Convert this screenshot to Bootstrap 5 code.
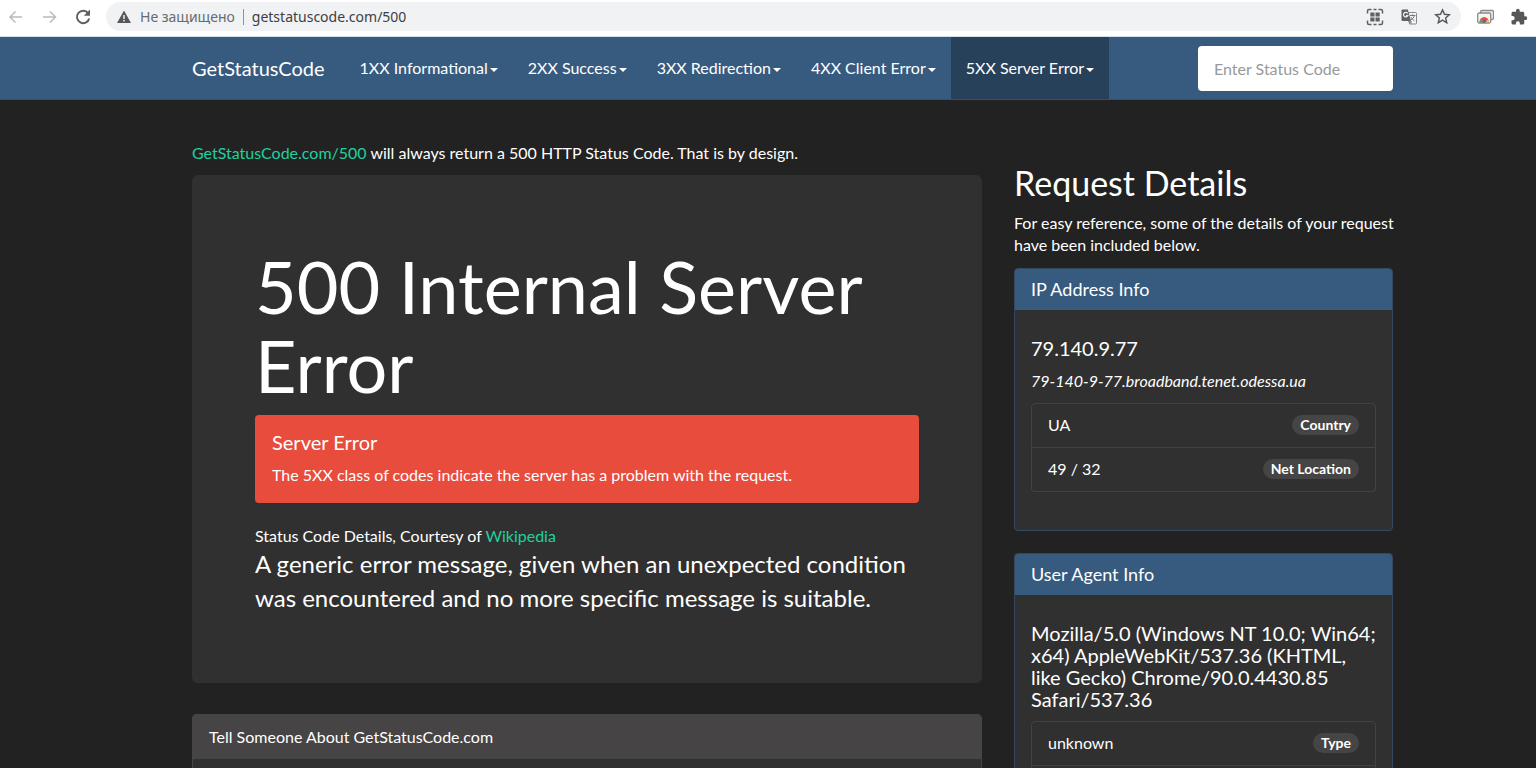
<!DOCTYPE html>
<html lang="en">
<head>
<meta charset="utf-8">
<meta name="viewport" content="width=device-width, initial-scale=1">
<title>500 Internal Server Error</title>
<link href="https://cdn.jsdelivr.net/npm/bootstrap@5.3.0/dist/css/bootstrap.min.css" rel="stylesheet">
<style>
  body { font-family: Lato, "Liberation Sans", sans-serif; font-size: 16px; line-height: 22px; color: #fff; background: #222; }
  a { color: #1fd1a0; text-decoration: none; }
  h1, h2, h3, h4 { font-weight: 400; margin: 0; }
  h4 { font-size: 20px; line-height: 22px; margin-bottom: 11px; }

  /* browser toolbar */
  .toolbar { height: 37px; padding: 0 8px 3px; background: #fff; border-bottom: 1px solid #d5e1ea; font-family: "Noto Sans", sans-serif; font-size: 14px; line-height: 20px; }
  .toolbar button { border: 0; padding: 0; background: none; display: flex; }
  .toolbar svg { display: block; }
  .omnibox { height: 29px; margin-left: 14px; padding: 0 10px; border-radius: 15px; background: #f0f2f4; color: #686b6e; }
  .omnibox input { border: 0; padding: 0; background: none; color: #3d4043; outline: 0; min-width: 0; }
  .url-divider { width: 1px; height: 16px; background: #909396; }

  /* site layout */
  .site-container { max-width: 1233px; padding: 0 16px; margin-left: 176px; }
  .site-row { --bs-gutter-x: 32px; }
  .site-nav { background: #375a7f; padding: 0; border-bottom: 1px solid #31506f; }
  .site-nav .navbar-brand { font-size: 20px; line-height: 22px; padding: 20px 0; margin: 0 20px 0 0; color: #fff; }
  .site-nav .navbar-nav .nav-link { font-size: 16px; line-height: 22px; padding: 20px 15px; color: #fff; }
  .site-nav .navbar-nav .nav-link.active { background: #28415b; }
  .site-nav .dropdown-toggle::after { border-width: 4px 4px 0; margin-left: 2px; vertical-align: 2px; }
  .code-search { width: 195px; height: 45px; padding: 0 16px; border: 0; border-radius: 4px; font-size: 16px; background: #fff; }
  .code-search::placeholder { color: #999; }

  .intro { padding-top: 42px; }
  .aside-intro { padding-top: 64px; }
  .hero { background: #303030; border-radius: 6px; padding: 72px 63px 68px; margin: 11px 0 31px; }
  .hero h1 { font-size: 72px; line-height: 79px; margin-bottom: 10px; }
  .hero .alert { background: #e74c3c; color: #fff; border: 0; border-radius: 4px; padding: 16px 17px 17px; margin-bottom: 22px; }
  .hero-text { font-size: 24px; line-height: 34px; margin: 0; }
  .aside-title { font-size: 34px; line-height: 37px; margin-bottom: 11px; }

  .panel { --bs-card-bg: #303030; --bs-card-color: #fff; --bs-card-border-radius: 4px; --bs-card-inner-border-radius: 3px; --bs-card-border-color: #33495f; margin-bottom: 22px; }
  .panel .card-header { background: #375a7f; padding: 9px 16px 10px; font-size: 18px; line-height: 22px; border: 0; }
  .panel .card-header h3 { font-size: inherit; line-height: inherit; }
  .panel .card-body { padding: 27px 16px 16px; }
  .panel-gray { --bs-card-border-color: #464545; }
  .panel-gray .card-header { background: #464444; padding: 11px 16px; font-size: 16px; }
  .info-list { --bs-list-group-bg: transparent; --bs-list-group-color: #fff; --bs-list-group-border-color: #424242; --bs-list-group-border-radius: 4px; margin: 11px 0 22px; }
  .info-list .list-group-item { padding: 10px 16px 11px; }
  .info-list .badge { font-size: 14px; line-height: 14px; padding: 3px 8px; background: #464545; }
</style>
</head>
<body>
<div class="vh-100 d-flex flex-column overflow-hidden">
  <div class="toolbar flex-shrink-0 d-flex align-items-center">
    <button type="button" aria-label="Back"><svg width="16" height="16" viewBox="0 0 16 16" fill="none" stroke="#b9bbbd" stroke-width="1.5"><path d="M14 8H2M7.500 2.500 2 8l5.500 5.500"/></svg></button>
    <button type="button" class="ms-3" aria-label="Forward"><svg width="18" height="16" viewBox="0 0 18 16" fill="none" stroke="#b9bbbd" stroke-width="1.5"><path d="M3 8h12M10 2.500 15.500 8 10 13.500"/></svg></button>
    <button type="button" class="ms-3" aria-label="Reload"><svg width="18" height="18" viewBox="0 0 18 18"><path d="M14.200 5.300A6.200 6.200 0 1 0 15.200 10.500" fill="none" stroke="#5d6063" stroke-width="2"/><path d="M16 1.500v6.300H9.800z" fill="#5d6063"/></svg></button>
    <div class="omnibox flex-grow-1 d-flex align-items-center">
      <svg width="16" height="16" viewBox="0 0 16 16"><path d="M8 1.500 15 14H1z" fill="#55585b"/><path d="M8 6v4M8 11v1.600" stroke="#f0f2f4" stroke-width="1.500"/></svg>
      <label for="address" class="ms-2 text-nowrap">Не защищено</label>
      <span class="url-divider mx-2"></span>
      <input id="address" class="flex-grow-1" type="text" value="getstatuscode.com/500">
      <div class="d-flex align-items-center gap-3">
        <button type="button" aria-label="QR code"><svg width="18" height="18" viewBox="0 0 18 18"><path d="M1.500 5.500V3Q1.500 1.500 3 1.500H5.500M7.500 1.500h3M12.500 1.500H15q1.500 0 1.500 1.500v2.500M16.500 12.500V15q0 1.500-1.500 1.500h-2.500M10.500 16.500h-3M5.500 16.500H3q-1.500 0-1.500-1.500v-2.500" fill="none" stroke="#5f6265" stroke-width="1.500"/><path d="M4.300 4.500h4.200v4H4.300zM9.500 4.500h4.200v4H9.500zM4.300 9.500h4.200v4H4.300zM9.500 9.500h4.200v4H9.500z" fill="#5f6265"/></svg></button>
        <button type="button" aria-label="Translate"><svg width="18" height="18" viewBox="0 0 18 18"><path d="M7.500 4.500h8q1 0 1 1v9.500q0 1-1 1h-6z" fill="#f4f5f6" stroke="#85888b"/><path d="M2.500 1.500h5.300l3.200 11.500H2.500q-1 0-1-1V2.500q0-1 1-1z" fill="#5f6265"/><path d="M7.700 5.300a2.300 2.300 0 1 0 .2 2.300H6" fill="none" stroke="#f0f2f4" stroke-width="1.200"/><path d="M10 7.500h5.500M12.600 6.200v1.300M14.500 7.500q-.8 3-3.500 4.500M11 9q1.200 2.500 3.500 4M8.500 13l2.500 2.500V13z" fill="none" stroke="#777a7d"/></svg></button>
        <button type="button" aria-label="Bookmark"><svg width="17" height="17" viewBox="0 0 18 18"><path d="m9 2 2.100 4.700 5.100.5-3.900 3.400 1.200 5L9 12.900l-4.500 2.700 1.200-5L1.800 7.200l5.100-.5z" fill="none" stroke="#55585b" stroke-width="1.500"/></svg></button>
      </div>
    </div>
    <button type="button" class="ms-3" aria-label="Saved tabs"><svg width="17" height="16" viewBox="0 0 17 16"><path d="M3.500 4V3q0-1.500 1.500-1.500h10Q16.500 1.500 16.500 3v6q0 1.500-1.500 1.500h-1" fill="#eee" stroke="#8c8c8c" stroke-width="1.300"/><rect x=".7" y="4" width="13" height="10" rx="1.500" fill="#f7f5ef" stroke="#8c8c8c" stroke-width="1.300"/><path d="M2.500 13.500a4.700 5.500 0 0 1 9.400 0z" fill="#d9544a"/><path d="M2.500 13.500a4.700 5 0 0 1 1.500-4l2.500 4z" fill="#55a777"/><path d="M12 13.500a4 4 0 0 0-1-3l-3 3z" fill="#ecc45b"/><circle cx="7.200" cy="12.300" r="1.600" fill="#4a7396"/></svg></button>
    <button type="button" class="ms-3" aria-label="Extensions"><svg width="18" height="18" viewBox="0 0 24 24" fill="#55585b"><path d="M20.500 11H19V7c0-1.100-.9-2-2-2h-4V3.500a2.500 2.500 0 0 0-5 0V5H4c-1.100 0-2 .9-2 2v3.800h1.500a2.700 2.700 0 0 1 0 5.400H2V20c0 1.100.9 2 2 2h3.800v-1.500a2.700 2.700 0 0 1 5.400 0V22H17c1.100 0 2-.9 2-2v-4h1.500a2.500 2.500 0 0 0 0-5z"/></svg></button>
  </div>

  <nav class="site-nav navbar navbar-expand flex-shrink-0">
    <div class="site-container d-flex align-items-center w-100">
      <a class="navbar-brand" href="#">GetStatusCode</a>
      <ul class="navbar-nav text-nowrap">
        <li class="nav-item"><a class="nav-link dropdown-toggle" href="#">1XX Informational</a></li>
        <li class="nav-item"><a class="nav-link dropdown-toggle" href="#">2XX Success</a></li>
        <li class="nav-item"><a class="nav-link dropdown-toggle" href="#">3XX Redirection</a></li>
        <li class="nav-item"><a class="nav-link dropdown-toggle" href="#">4XX Client Error</a></li>
        <li class="nav-item"><a class="nav-link dropdown-toggle active" href="#">5XX Server Error</a></li>
      </ul>
      <form class="ms-auto"><input class="code-search" type="text" placeholder="Enter Status Code" aria-label="Enter Status Code"></form>
    </div>
  </nav>

  <main class="flex-grow-1 overflow-hidden">
    <div class="site-container">
      <div class="row site-row">
        <div class="col-8 intro">
          <p class="m-0"><a href="#">GetStatusCode.com/500</a> will always return a 500 HTTP Status Code. That is by design.</p>
          <section class="hero">
            <h1>500 Internal Server Error</h1>
            <div class="alert">
              <h4>Server Error</h4>
              <p class="m-0">The 5XX class of codes indicate the server has a problem with the request.</p>
            </div>
            <div>Status Code Details, Courtesy of <a href="#">Wikipedia</a></div>
            <p class="hero-text">A generic error message, given when an unexpected condition was encountered and no more specific message is suitable.</p>
          </section>
          <section class="card panel panel-gray">
            <div class="card-header">Tell Someone About GetStatusCode.com</div>
            <div class="card-body"></div>
          </section>
        </div>
        <div class="col-4 aside-intro">
          <h2 class="aside-title">Request Details</h2>
          <p class="mb-2 pb-1 text-nowrap">For easy reference, some of the details of your request<br>have been included below.</p>
          <section class="card panel">
            <div class="card-header"><h3>IP Address Info</h3></div>
            <div class="card-body">
              <h4>79.140.9.77</h4>
              <em class="d-block">79-140-9-77.broadband.tenet.odessa.ua</em>
              <ul class="list-group info-list">
                <li class="list-group-item d-flex justify-content-between align-items-center">UA <span class="badge rounded-pill">Country</span></li>
                <li class="list-group-item d-flex justify-content-between align-items-center">49 / 32 <span class="badge rounded-pill">Net Location</span></li>
              </ul>
            </div>
          </section>
          <section class="card panel">
            <div class="card-header"><h3>User Agent Info</h3></div>
            <div class="card-body">
              <h4>Mozilla/5.0 (Windows NT 10.0; Win64; x64) AppleWebKit/537.36 (KHTML, like Gecko) Chrome/90.0.4430.85 Safari/537.36</h4>
              <ul class="list-group info-list">
                <li class="list-group-item d-flex justify-content-between align-items-center">unknown <span class="badge rounded-pill">Type</span></li>
                <li class="list-group-item">&nbsp;</li>
              </ul>
            </div>
          </section>
        </div>
      </div>
    </div>
  </main>
</div>
<script src="https://cdn.jsdelivr.net/npm/bootstrap@5.3.0/dist/js/bootstrap.bundle.min.js"></script>
</body>
</html>
